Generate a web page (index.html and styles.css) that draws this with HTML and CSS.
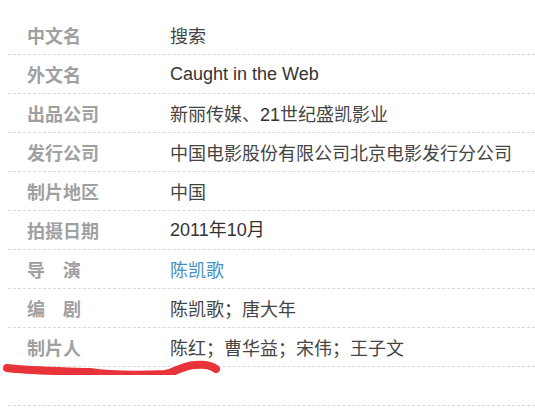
FILE: index.html
```html
<!DOCTYPE html>
<html>
<head>
	<title>Caught in the Web</title>
	<link rel="stylesheet" href="styles.css">
</head>
<body>
	<div class="info">
		<div class="row"><span class="name">中文名</span><span class="value">搜索</span></div>
		<div class="row"><span class="name">外文名</span><span class="value latin">Caught in the Web</span></div>
		<div class="row"><span class="name">出品公司</span><span class="value">新丽传媒、<span class="latin">21</span>世纪盛凯影业</span></div>
		<div class="row"><span class="name">发行公司</span><span class="value">中国电影股份有限公司北京电影发行分公司</span></div>
		<div class="row"><span class="name">制片地区</span><span class="value">中国</span></div>
		<div class="row"><span class="name">拍摄日期</span><span class="value latin">2011年10月</span></div>
		<div class="row"><span class="name">导　演</span><span class="value"><a href="#">陈凯歌</a></span></div>
		<div class="row"><span class="name">编　剧</span><span class="value">陈凯歌；唐大年</span></div>
		<div class="row"><span class="name">制片人</span><span class="value">陈红；曹华益；宋伟；王子文</span></div>
		<div class="row"></div>

		<!-- hand drawn mark under the last row -->
		<svg class="mark" width="230" height="20" viewBox="0 355 230 20">
			<path d="M7 368 C 30 371, 60 371, 90 372 C 110 375, 140 375, 165 374 C 175 373, 180 366, 195 365 C 205 364, 212 366, 216 369" fill="none" stroke="#e8333a" stroke-width="8" stroke-linecap="round" stroke-linejoin="round"/>
		</svg>
	</div>
</body>
</html>
```
FILE: styles.css
```css
*{
	margin: 0;
	padding: 0;
}

body{
	padding: 16px 0 0 8px;
	background-color: #fff;
	font: normal 18px "Noto Sans CJK SC", sans-serif;
}

.info{
	position: relative;
}

.row{
	display: flex;
	height: 38px;
	line-height: 38px;
	border-bottom: 1px dashed #d9d9d9;
}

.name{
	width: 143px;
	padding-left: 19px;
	color: #a0a0a0;
	font-weight: bold;
}

.value{
	color: #444;
}

.latin{
	font-family: "Liberation Sans", "Noto Sans CJK SC", sans-serif;
	color: #333;
}

.value a{
	color: #4690c4;
	text-decoration: none;
}

.mark{
	position: absolute;
	left: -8px;
	top: 339px;
}
```
